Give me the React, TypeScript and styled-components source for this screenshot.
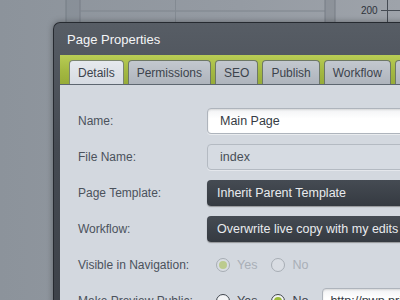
import React from 'react';
import styled, { createGlobalStyle, css } from 'styled-components';

const GlobalStyle = createGlobalStyle`
  html, body {
    margin: 0;
    padding: 0;
    width: 400px;
    height: 300px;
    overflow: hidden;
    font-family: 'Liberation Sans', Arial, sans-serif;
  }
`;

const Page = styled.div`
  position: relative;
  width: 400px;
  height: 300px;
  overflow: hidden;
  display: flex;
  align-items: flex-start;
  padding: 22px 0 0 53px;
  box-sizing: border-box;
  background: linear-gradient(90deg, #8c939b 0%, #959ba3 60%, #9ea3aa 100%);
`;

const Backdrop = styled.svg`
  position: absolute;
  left: 0;
  top: 0;
  pointer-events: none;
`;

const Dialog = styled.div`
  position: relative;
  flex: 0 0 auto;
  width: 420px;
  border: 1px solid #262a30;
  border-right: none;
  border-radius: 7px 0 0 0;
  background: linear-gradient(180deg, #575d65 0%, #454a52 40%, #3c4148 100%);
  box-shadow: 0 0 6px rgba(0, 0, 0, 0.35);
`;

const Header = styled.div`
  height: 32px;
  display: flex;
  align-items: center;
  padding-left: 13px;
  color: #f4f5f7;
  font-size: 13px;
`;

const Body = styled.div`
  margin-left: 6px;
`;

const TabBar = styled.div`
  display: flex;
  gap: 4px;
  height: 30px;
  padding: 5px 0 0 9px;
  box-sizing: border-box;
  background: linear-gradient(180deg, #b9cd55 0%, #a5ba43 50%, #97ac38 100%);
  border-bottom: 1px solid #5d6670;
  align-items: flex-end;
  overflow: hidden;
`;

const Tab = styled.div<{ $active?: boolean }>`
  flex: 0 0 auto;
  height: 24px;
  padding: 0 8px;
  display: flex;
  align-items: center;
  font-size: 12px;
  color: #3c434c;
  border: 1px solid #6e7866;
  border-bottom: none;
  border-radius: 4px 4px 0 0;
  box-sizing: border-box;
  background: linear-gradient(180deg, #c3c8cf 0%, #aeb4bc 100%);
  ${({ $active }) =>
    $active &&
    css`
      height: 25px;
      margin-bottom: -1px;
      background: linear-gradient(180deg, #e6e9ee 0%, #d5dae1 100%);
      border-color: #7c8670;
    `}
`;

const Form = styled.div`
  background: #d3d8df;
  padding: 23px 0 20px 18px;
  display: grid;
  grid-template-columns: 129px 1fr;
  grid-auto-rows: 26px;
  row-gap: 10px;
  align-items: center;
`;

const Label = styled.div`
  font-size: 12px;
  color: #4b525c;
`;

const Input = styled.div<{ $muted?: boolean }>`
  height: 26px;
  box-sizing: border-box;
  display: flex;
  align-items: center;
  padding-left: 12px;
  font-size: 12.5px;
  color: #353b44;
  border-radius: 4px;
  border: 1px solid #aeb4bc;
  background: linear-gradient(180deg, #f2f3f5 0%, #ffffff 40%, #ffffff 100%);
  box-shadow: inset 0 1px 2px rgba(0, 0, 0, 0.12), 0 1px 0 rgba(255, 255, 255, 0.5);
  white-space: nowrap;
  ${({ $muted }) =>
    $muted &&
    css`
      background: #d6dbe2;
      border-color: #b4bac2;
      color: #474e57;
      box-shadow: 0 1px 0 rgba(255, 255, 255, 0.4);
    `}
`;

const Select = styled.div`
  height: 26px;
  box-sizing: border-box;
  display: flex;
  align-items: center;
  padding-left: 10px;
  font-size: 12.5px;
  color: #e9ebee;
  border-radius: 4px;
  background: linear-gradient(180deg, #454b53 0%, #353a41 100%);
  box-shadow: 0 1px 1px rgba(0, 0, 0, 0.35), 0 1px 0 rgba(255, 255, 255, 0.3);
  white-space: nowrap;
`;

const RadioGroup = styled.div<{ $disabled?: boolean }>`
  display: flex;
  align-items: center;
  padding-left: 9px;
  font-size: 12.5px;
  color: ${({ $disabled }) => ($disabled ? '#a9afb7' : '#3c434c')};
`;

const RadioOption = styled.label`
  display: flex;
  align-items: center;
  gap: 7px;
  margin-right: 14px;
`;

const RadioDot = styled.span<{ $checked?: boolean; $disabled?: boolean }>`
  width: 14px;
  height: 14px;
  box-sizing: border-box;
  border-radius: 50%;
  border: 1px solid ${({ $disabled }) => ($disabled ? '#a7adb4' : '#3f454d')};
  background: ${({ $disabled }) => ($disabled ? '#d9dde3' : '#f3f4f6')};
  display: flex;
  align-items: center;
  justify-content: center;
  &::after {
    content: '';
    width: 8px;
    height: 8px;
    border-radius: 50%;
    display: ${({ $checked }) => ($checked ? 'block' : 'none')};
    background: ${({ $disabled }) => ($disabled ? '#bccb8e' : '#9cbb3c')};
  }
`;

const InlineRow = styled.div`
  display: flex;
  align-items: center;
`;

const UrlInput = styled(Input)`
  flex: 1;
  padding-left: 7px;
`;

const tabs = ['Details', 'Permissions', 'SEO', 'Publish', 'Workflow', 'Versions'];

export default function App() {
  return (
    <>
      <GlobalStyle />
      <Page>
        <Backdrop width="400" height="300" viewBox="0 0 400 300">
          <rect x="66" y="0" width="14" height="300" fill="#7f868e" opacity="0.35" />
          <line x1="66" y1="0" x2="66" y2="300" stroke="#757c84" />
          <line x1="80" y1="0" x2="80" y2="300" stroke="#767d85" />
          <line x1="80" y1="11" x2="325" y2="11" stroke="#7e858d" />
          <line x1="175.5" y1="0" x2="175.5" y2="22" stroke="#838a92" />
          <rect x="325" y="0" width="10" height="22" fill="#7f868e" opacity="0.5" />
          <line x1="325" y1="0" x2="325" y2="22" stroke="#767d85" />
          <line x1="335" y1="0" x2="335" y2="22" stroke="#767d85" />
          <text x="361" y="14" fontSize="10" fill="#2e333a" fontFamily="Liberation Sans, Arial, sans-serif">200</text>
          <line x1="381" y1="10.5" x2="400" y2="10.5" stroke="#454b53" />
          <line x1="387.5" y1="0" x2="387.5" y2="22" stroke="#454b53" />
        </Backdrop>
        <Dialog>
          <Header>Page Properties</Header>
          <Body>
            <TabBar>
              {tabs.map((t, i) => (
                <Tab key={t} $active={i === 0}>
                  {t}
                </Tab>
              ))}
            </TabBar>
            <Form>
              <Label>Name:</Label>
              <Input>Main Page</Input>
              <Label>File Name:</Label>
              <Input $muted>index</Input>
              <Label>Page Template:</Label>
              <Select>Inherit Parent Template</Select>
              <Label>Workflow:</Label>
              <Select>Overwrite live copy with my edits</Select>
              <Label>Visible in Navigation:</Label>
              <RadioGroup $disabled>
                <RadioOption>
                  <RadioDot $checked $disabled />
                  Yes
                </RadioOption>
                <RadioOption>
                  <RadioDot $disabled />
                  No
                </RadioOption>
              </RadioGroup>
              <Label>Make Preview Public:</Label>
              <InlineRow>
                <RadioGroup>
                  <RadioOption>
                    <RadioDot />
                    Yes
                  </RadioOption>
                  <RadioOption>
                    <RadioDot $checked />
                    No
                  </RadioOption>
                </RadioGroup>
                <UrlInput>http://pwp.private.example.com</UrlInput>
              </InlineRow>
            </Form>
          </Body>
        </Dialog>
      </Page>
    </>
  );
}
